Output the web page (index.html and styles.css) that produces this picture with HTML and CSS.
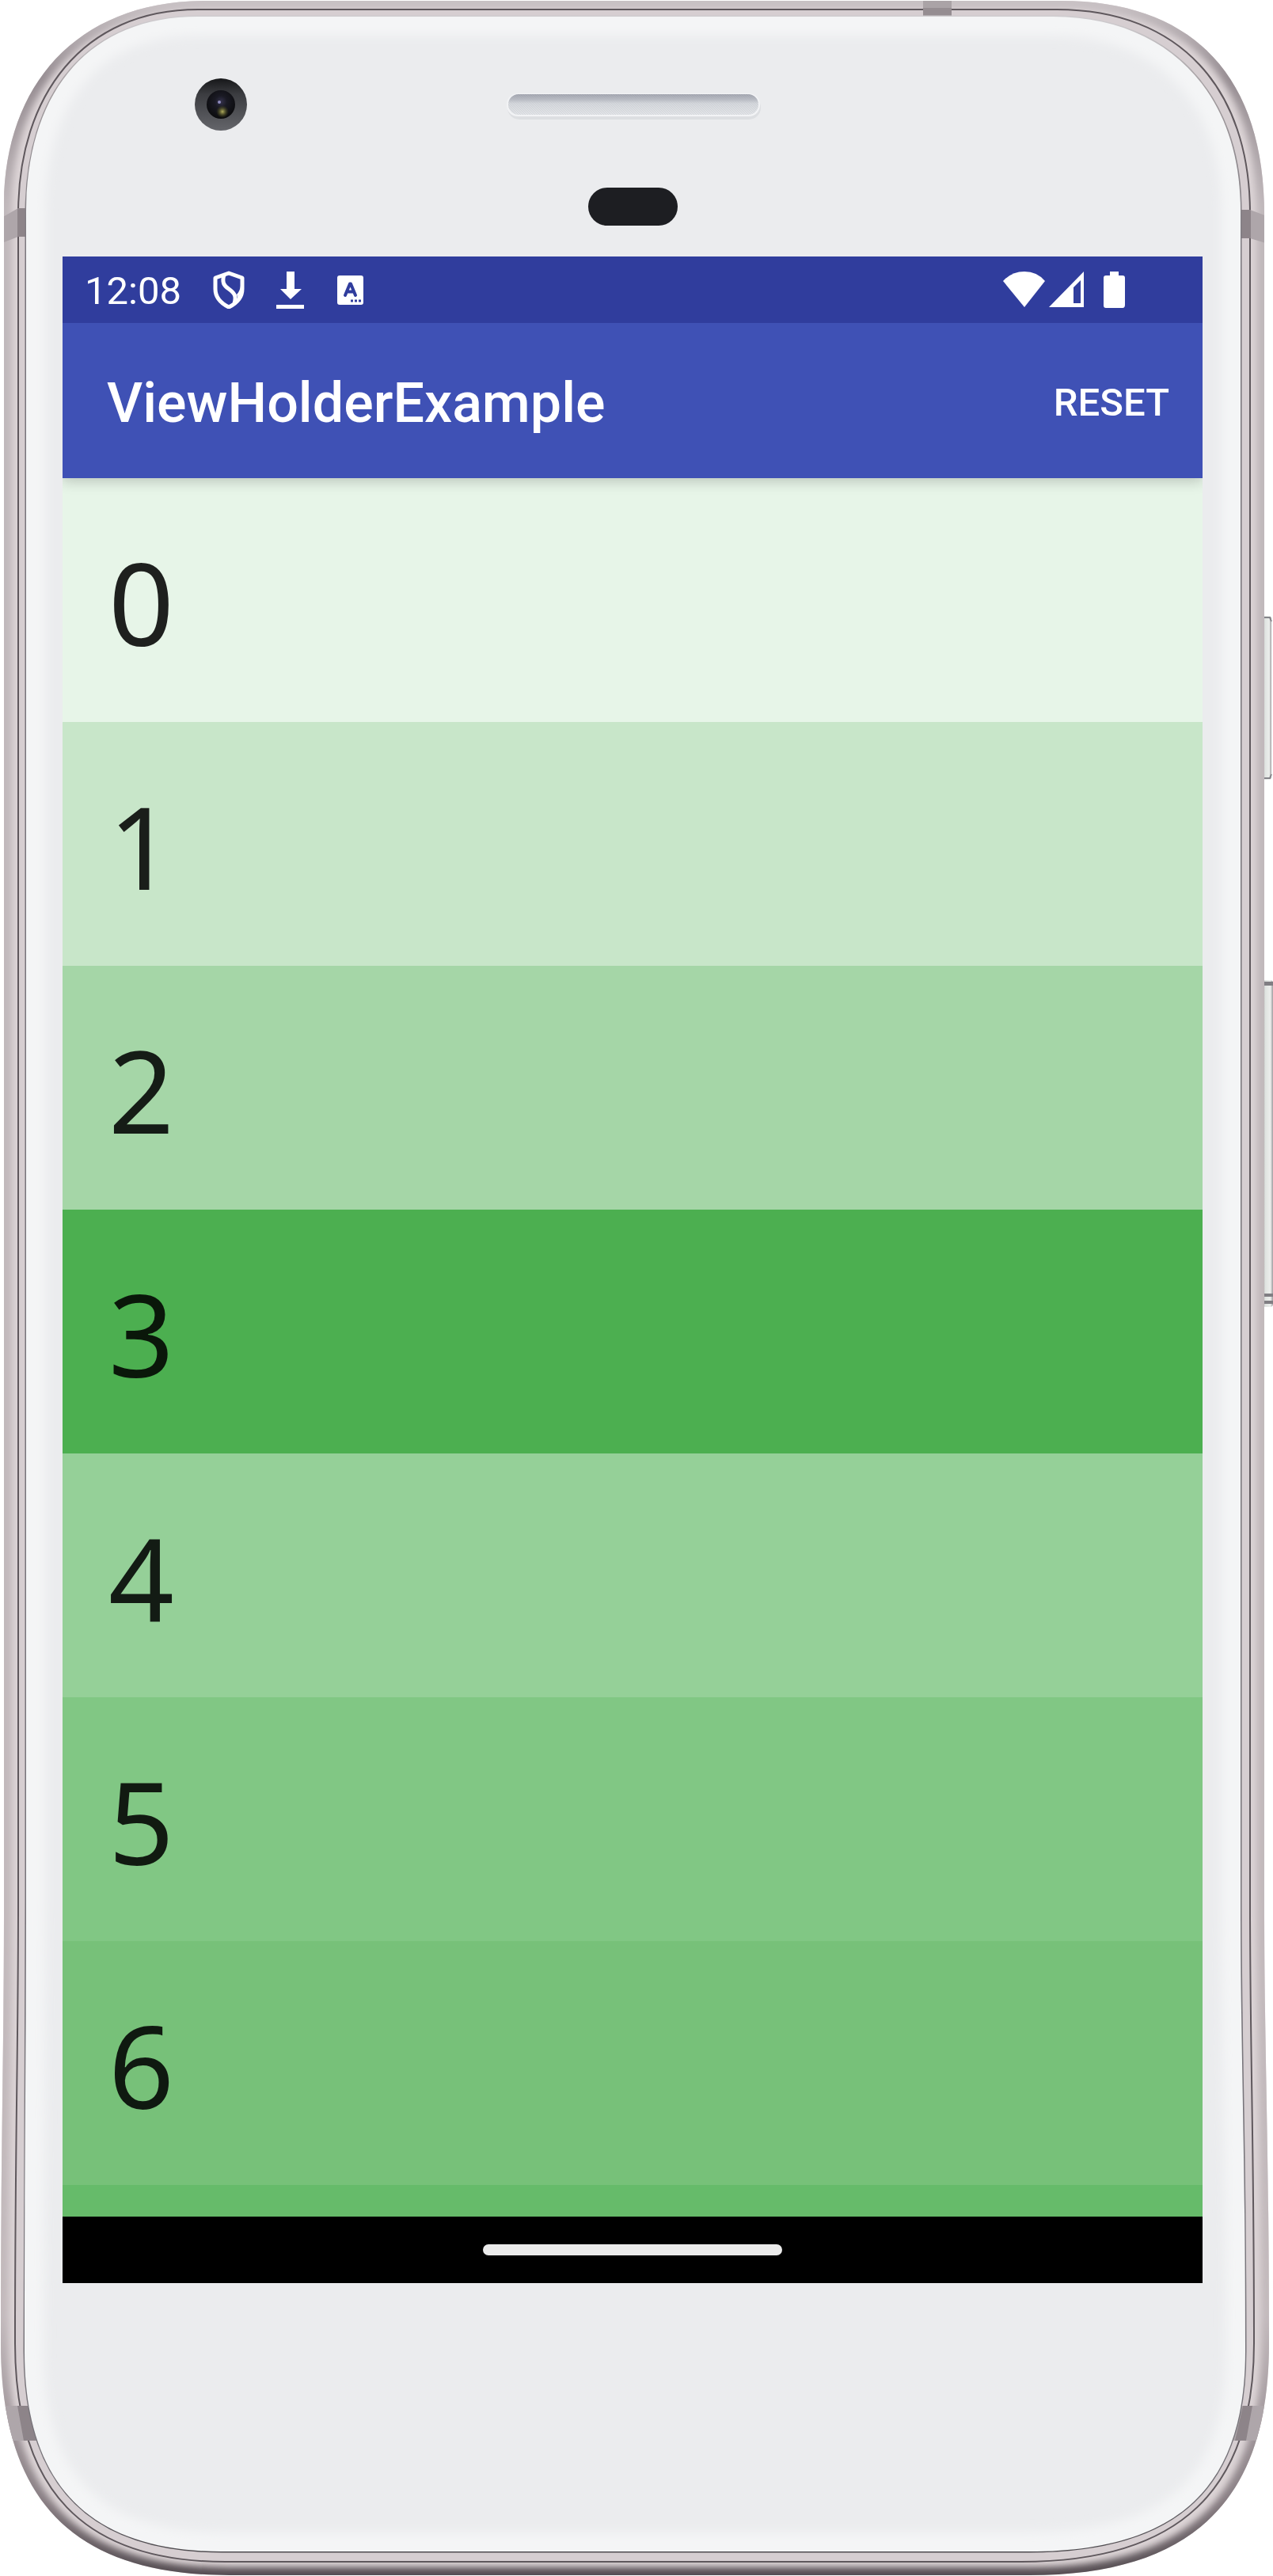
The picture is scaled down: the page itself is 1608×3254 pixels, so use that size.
FILE: index.html
```html
<!DOCTYPE html>
<html lang="en">
<head>
<meta charset="utf-8">
<meta name="viewport" content="width=device-width, initial-scale=1">
<title>ViewHolderExample</title>
<link rel="stylesheet" href="styles.css">
</head>
<body>
<div class="phone">
  <svg class="phone__shell" viewBox="0 0 1608 3254" preserveAspectRatio="none" aria-hidden="true">
    <defs>
      <path id="outer" d="M260 1H1340C1510 1 1597 100 1597 270V2400C1597 2600 1603 2700 1603 2960C1603 3150 1515 3253 1300 3253H290C85 3253 1 3150 1 2960C1 2700 5 2600 5 2400V260C5 110 95 1 260 1Z"/>
      <path id="groove" d="M250 12H1335C1490 12 1579 112 1579 270V2400C1579 2600 1584 2700 1584 2960C1584 3145 1490 3236 1290 3236H285C105 3236 19 3145 19 2960C19 2700 23 2600 23 2400V270C23 120 105 12 250 12Z"/>
      <path id="glass" d="M250 21H1330C1475 21 1567 118 1567 265V2400C1567 2600 1573 2700 1573 2970C1573 3140 1490 3223 1300 3223H280C105 3223 31 3130 31 2970C31 2700 33 2600 33 2400V270C33 118 110 21 250 21Z"/>
      <clipPath id="clipOuter"><use href="#outer"/></clipPath>
      <clipPath id="clipGlass"><use href="#glass"/></clipPath>
      <filter id="soft4" x="-5%" y="-5%" width="110%" height="110%"><feGaussianBlur stdDeviation="4"/></filter>
      <filter id="soft9" x="-5%" y="-5%" width="110%" height="110%"><feGaussianBlur stdDeviation="7"/></filter>
      <linearGradient id="rim" x1="0" y1="0" x2="0" y2="1">
        <stop offset="0" stop-color="#c9c2c5"/><stop offset=".03" stop-color="#968d92"/><stop offset=".08" stop-color="#c0b8bb"/><stop offset=".9" stop-color="#c2b9bc"/><stop offset=".97" stop-color="#8a8085"/><stop offset="1" stop-color="#554d52"/>
      </linearGradient>
      <linearGradient id="edge" x1="0" y1="0" x2="0" y2="1">
        <stop offset="0" stop-color="#cfcccf"/><stop offset=".03" stop-color="#a09a9d"/><stop offset=".1" stop-color="#77737a"/><stop offset=".97" stop-color="#77747a"/><stop offset="1" stop-color="#4f4c50"/>
      </linearGradient>
      <linearGradient id="grille" x1="0" y1="0" x2="0" y2="1">
        <stop offset="0" stop-color="#9fa2ac"/><stop offset=".25" stop-color="#b7bac2"/><stop offset=".45" stop-color="#d5d8dc"/><stop offset="1" stop-color="#e3e5e8"/>
      </linearGradient>
      <linearGradient id="key" x1="0" y1="0" x2="1" y2="0">
        <stop offset="0" stop-color="#a9a9aa"/><stop offset=".25" stop-color="#dfe3e0"/><stop offset=".75" stop-color="#eceeec"/><stop offset="1" stop-color="#9c9a9d"/>
      </linearGradient>
      <linearGradient id="ring" x1="0" y1="0" x2="0" y2="1">
        <stop offset="0" stop-color="#161719"/><stop offset=".3" stop-color="#3b3c40"/><stop offset="1" stop-color="#64656a"/>
      </linearGradient>
      <radialGradient id="lens" cx=".5" cy=".4" r=".6">
        <stop offset="0" stop-color="#34324c"/><stop offset=".35" stop-color="#1a1a24"/><stop offset="1" stop-color="#0b0b0d"/>
      </radialGradient>
      <radialGradient id="flare"><stop offset="0" stop-color="#b5b060"/><stop offset="1" stop-color="#4c4f15" stop-opacity="0"/></radialGradient>
      <pattern id="mesh" width="6" height="6" patternUnits="userSpaceOnUse"><path d="M0 0L6 6M0 3L3 6M3 0L6 3" stroke="#b9bcc4" stroke-width="1" opacity=".35"/></pattern>
    </defs>

    <rect x="1595" y="778" width="11" height="207" rx="4" fill="url(#key)"/>
    <path d="M1597 780h7l2 5M1597 983h7l2-5" fill="none" stroke="#85858a" stroke-width="2"/>
    <rect x="1595" y="1238" width="13" height="413" rx="4" fill="url(#key)"/>
    <path d="M1597 1240h11v5h-11zM1597 1634h11v4h-11zM1597 1643h11v4h-11z" fill="#807e83"/>

    <use href="#outer" fill="#dcd4d6"/>
    <g clip-path="url(#clipOuter)">
      <use href="#outer" fill="none" stroke="url(#rim)" stroke-width="20" filter="url(#soft4)"/>
      <use href="#groove" fill="#d6ced1" stroke="#5f585d" stroke-width="2"/>
      <path d="M0 276L23 263H40V299H23L0 308ZM1608 276L1579 265H1560V301H1579L1608 310ZM0 3039H50V3083H0ZM1550 3039H1608V3083H1550Z" fill="#aea6aa"/>
      <path d="M22 263H36V299H22ZM1566 265H1580V301H1566ZM22 3039H36L46 3083H30ZM1582 3039H1570L1560 3083H1574Z" fill="#8d8489"/>
      <path d="M1166 1H1202V20H1166Z" fill="#958d91"/>
      <path d="M1166 1H1202V10H1166Z" fill="#aaa3a6"/>
    </g>
    <use href="#glass" fill="#ebecee" stroke="url(#edge)" stroke-width="3"/>
    <g clip-path="url(#clipGlass)">
      <use href="#glass" fill="none" stroke="#f4f5f6" stroke-width="48" filter="url(#soft9)"/>
    </g>

    <circle cx="279" cy="132" r="33" fill="url(#ring)"/>
    <circle cx="279" cy="132" r="18" fill="url(#lens)"/>
    <circle cx="281" cy="141" r="8" fill="url(#flare)"/>
    <circle cx="277" cy="129" r="2" fill="#8f8cc0"/>

    <rect x="641" y="121" width="320" height="30" rx="15" fill="#dddfe2"/>
    <rect x="640" y="118" width="320" height="29" rx="14" fill="#f2f3f5"/>
    <rect x="642" y="119" width="316" height="26" rx="13" fill="url(#grille)"/>
    <rect x="642" y="119" width="316" height="26" rx="13" fill="url(#mesh)"/>
    <rect x="743" y="237" width="113" height="48" rx="24" fill="#1d1e22"/>
  </svg>

  <main class="screen">
    <div class="status">
      <span class="status__clock">12:08</span>
      <svg class="status__icon" width="40" height="48" viewBox="0 0 40 48" aria-hidden="true">
        <path d="M20 3L37 9V23C37 33 30 41 20 46C10 41 3 33 3 23V9Z" fill="none" stroke="#fff" stroke-width="5" stroke-linejoin="round"/>
        <path d="M14 5C11 15 14 19 20 23C27 28 30 32 27 41" fill="none" stroke="#fff" stroke-width="5"/>
        <path d="M36 19L35 27L31 35Q31 32 30 30Q34 26 35 19Z" fill="#fff"/>
      </svg>
      <svg class="status__icon" width="36" height="48" viewBox="0 0 36 48" aria-hidden="true">
        <path d="M13 1H23V23H32L18 36L5 23H13ZM0 43H35V48H0Z" fill="#fff"/>
      </svg>
      <svg class="status__icon" width="38" height="48" viewBox="0 0 38 48" aria-hidden="true">
        <rect x="1" y="6" width="33" height="37" rx="3" fill="#fff"/>
        <path d="M11 31L17 16.500H18L24 31M13 26.500H22" fill="none" stroke="#303d9d" stroke-width="4" stroke-linecap="round" stroke-linejoin="round"/>
        <path d="M18 36.500h3v3h-3zM23 36.500h3v3h-3zM28 36.500h3v3h-3z" fill="#303d9d"/>
      </svg>
      <div class="status__system">
        <svg width="54" height="48" viewBox="0 0 54 48" aria-hidden="true"><path d="M0 13Q11 1 27 1T53 13L27 46Z" fill="#fff"/></svg>
        <svg width="44" height="48" viewBox="0 0 44 48" aria-hidden="true"><path fill-rule="evenodd" d="M44 1V46H0ZM40 12L31 21V41H40Z" fill="#fff"/></svg>
        <svg width="48" height="48" viewBox="0 0 48 48" aria-hidden="true"><path d="M29 1H40V6H45Q48 6 48 9V43Q48 47 45 47H24Q21 47 21 44V9Q21 6 24 6H29Z" fill="#fff"/></svg>
      </div>
    </div>

    <header class="appbar">
      <h1 class="appbar__title">ViewHolderExample</h1>
      <button class="appbar__action" type="button">RESET</button>
    </header>

    <ul class="list">
      <li class="list__row list__row--50">0</li>
      <li class="list__row list__row--100">1</li>
      <li class="list__row list__row--200">2</li>
      <li class="list__row list__row--500">3</li>
      <li class="list__row list__row--250">4</li>
      <li class="list__row list__row--300">5</li>
      <li class="list__row list__row--350">6</li>
      <li class="list__row list__row--peek" aria-hidden="true"></li>
    </ul>

    <div class="gesture"><span class="gesture__handle"></span></div>
  </main>
</div>
</body>
</html>
```
FILE: styles.css
```css
* {
  box-sizing: border-box;
}

body {
  margin: 0;
  background: #fff;
  font-family: Roboto, "Liberation Sans", sans-serif;
}

.phone {
  position: relative;
  padding: 324px 89px 370px 79px;
}

/* The device body lies behind the screen and follows its size. */
.phone__shell {
  position: absolute;
  inset: 0;
  width: 100%;
  height: 100%;
}

.screen {
  position: relative;
  display: flex;
  flex-direction: column;
  overflow: hidden;
}

.status {
  position: relative;
  z-index: 2;
  display: flex;
  align-items: center;
  gap: 40px;
  height: 84px;
  padding: 0 98px 0 28px;
  background: #303d9d;
  color: #fff;
}

.status__clock {
  padding-top: 4px;
  font-size: 49px;
  line-height: 56px;
}

.status__icon {
  flex: none;
}

.status__system {
  display: flex;
  gap: 4px;
  margin-left: auto;
}

.appbar {
  position: relative;
  z-index: 1;
  display: flex;
  align-items: center;
  justify-content: space-between;
  height: 196px;
  padding: 6px 42px 0 56px;
  background: #3f51b5;
  box-shadow: 0 4px 16px rgba(0, 0, 0, 0.2);
  color: #fff;
}

.appbar__title {
  margin: 0;
  font-size: 70px;
  font-weight: 500;
  line-height: 84px;
}

.appbar__action {
  padding: 0;
  border: 0;
  background: none;
  color: inherit;
  font: 500 49px/56px Roboto, "Liberation Sans", sans-serif;
  cursor: pointer;
}

.list {
  margin: 0;
  padding: 0;
  list-style: none;
}

.list__row {
  display: flex;
  align-items: center;
  height: 308px;
  padding: 4px 58px 0;
  color: rgba(0, 0, 0, 0.87);
  font-family: "Noto Sans", "Open Sans", sans-serif;
  font-size: 145px;
  line-height: 200px;
}

.list__row--50 { background: #e7f5e8; }
.list__row--100 { background: #c8e6c9; }
.list__row--200 { background: #a5d6a7; }
.list__row--250 { background: #95d098; }
.list__row--300 { background: #81c784; }
.list__row--350 { background: #77c179; }
.list__row--500 { background: #4caf50; }

.list__row--peek {
  height: 40px;
  background: #66bb6a;
}

.gesture {
  display: flex;
  align-items: center;
  justify-content: center;
  height: 84px;
  background: #000;
}

.gesture__handle {
  width: 378px;
  height: 14px;
  border-radius: 7px;
  background: #ebebeb;
}
```
